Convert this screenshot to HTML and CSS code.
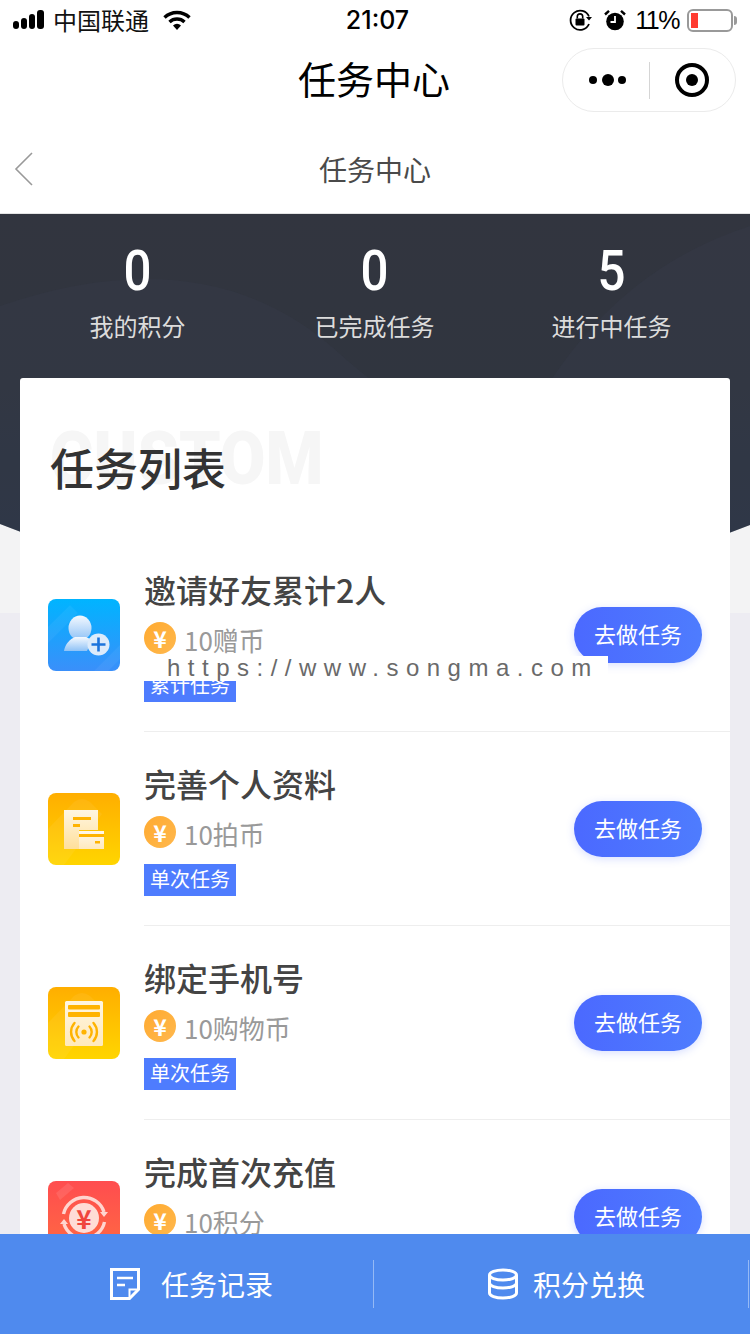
FILE: index.html
```html
<!DOCTYPE html>
<html lang="zh-CN">
<head>
<meta charset="utf-8">
<title>任务中心</title>
<link rel="stylesheet" href="styles.css">
</head>
<body>
<div class="page">
  <div class="status">
    <div class="status-left">
      <svg class="signal" width="34" height="20" viewBox="0 0 34 20"><rect x="1" y="11" width="6" height="8" rx="3"/><rect x="9" y="8" width="6" height="11" rx="3"/><rect x="17" y="4" width="6" height="15" rx="3"/><rect x="25" y="0" width="7" height="19" rx="3"/></svg>
      <span class="carrier">中国联通</span>
      <svg class="wifi" width="28" height="20" viewBox="0 0 28 20"><path d="M1.500 7.500a18 18 0 0 1 25 0" fill="none" stroke="#000" stroke-width="3.400"/><path d="M6.500 12a11 11 0 0 1 15 0" fill="none" stroke="#000" stroke-width="3.400"/><path d="M10 15.400a6 6 0 0 1 8 0L14 20z" fill="#000"/></svg>
    </div>
    <div class="time">21:07</div>
    <div class="status-right">
      <svg width="24" height="22" viewBox="0 0 24 22"><path d="M20 7.500A9.600 9.600 0 1 0 20 15" fill="none" stroke="#000" stroke-width="1.800"/><path d="M17 8h6l-3 3.500z" fill="#000"/><rect x="6.500" y="9.500" width="9" height="7" rx="1"/><path d="M8.300 9.500V7.600a2.700 2.700 0 0 1 5.400 0v1.900" fill="none" stroke="#000" stroke-width="1.600"/></svg>
      <svg class="alarm" width="22" height="22" viewBox="0 0 22 22"><circle cx="11" cy="12.500" r="8.800"/><path d="M11 7v6H6.500" fill="none" stroke="#fff" stroke-width="1.800"/><path d="M1 5.500 5 1.800M21 5.500 17 1.800" stroke="#000" stroke-width="2.400"/></svg>
      <span class="percent">11%</span>
      <div class="battery"><div class="battery-level"></div></div>
      <div class="battery-nub"></div>
    </div>
  </div>

  <div class="nav">
    <div class="nav-title">任务中心</div>
    <div class="capsule">
      <svg class="capsule-dots" width="40" height="14" viewBox="0 0 40 14"><circle cx="5" cy="7" r="4"/><circle cx="20" cy="7" r="6"/><circle cx="34" cy="7" r="4"/></svg>
      <div class="capsule-line"></div>
      <svg width="36" height="36" viewBox="0 0 36 36"><circle cx="18" cy="18" r="15" fill="none" stroke="#000" stroke-width="4"/><circle cx="18" cy="18" r="6"/></svg>
    </div>
  </div>

  <div class="header">
    <svg class="back" width="20" height="34" viewBox="0 0 20 34"><path d="M18 1 2 17l16 16" fill="none" stroke="#999" stroke-width="1.600"/></svg>
    <div class="header-title">任务中心</div>
  </div>

  <div class="main">
    <svg class="hero-bg" width="750" height="399" viewBox="0 0 750 399">
      <defs>
        <linearGradient id="heroFill" x1="0" y1="0" x2="0" y2="1"><stop offset="0" stop-color="#32353f"/><stop offset=".45" stop-color="#30353f"/><stop offset="1" stop-color="#2a3547"/></linearGradient>
      </defs>
      <path d="M0 0H750V311Q375 460 0 310Z" fill="url(#heroFill)"/>
      <path d="M0 92Q210 20 340 140 440 230 520 220 600 60 750 12V311Q375 460 0 310Z" fill="#3a4354" opacity=".2"/>
    </svg>

    <div class="stats">
      <div class="stat"><div class="stat-num">0</div><div class="stat-label">我的积分</div></div>
      <div class="stat"><div class="stat-num">0</div><div class="stat-label">已完成任务</div></div>
      <div class="stat"><div class="stat-num">5</div><div class="stat-label">进行中任务</div></div>
    </div>

    <div class="card">
      <div class="card-head">
        <div class="ghost">CUSTOM</div>
        <h1 class="card-title">任务列表</h1>
      </div>

      <div class="row">
        <svg class="task-icon" width="72" height="72" viewBox="0 0 72 72">
          <defs>
            <linearGradient id="blueBg" x1="0" y1="0" x2="0" y2="1"><stop offset="0" stop-color="#00b4ff"/><stop offset="1" stop-color="#3a8ffa"/></linearGradient>
            <linearGradient id="person" x1="0" y1="0" x2="0" y2="1"><stop offset="0" stop-color="#f4f9ff"/><stop offset="1" stop-color="#8fc2f6"/></linearGradient>
          </defs>
          <rect width="72" height="72" rx="8" fill="url(#blueBg)"/>
          <path d="M0 28 22 6l8 8L0 44zM46 72l26-26v14L60 72z" fill="#fff" opacity=".05"/>
          <ellipse cx="32" cy="29" rx="11.500" ry="12.500" fill="url(#person)"/>
          <path d="M16 52c1-7 6-12 11-14h11l6 3-5 11z" fill="url(#person)"/>
          <circle cx="50.500" cy="45.500" r="11" fill="#dcebfb"/>
          <path d="M43.500 45.500h14M50.500 38.500v14" stroke="#1c74dc" stroke-width="2.600"/>
        </svg>
        <div class="info">
          <div class="task-name">邀请好友累计2人</div>
          <div class="reward"><span class="coin">¥</span><span class="reward-text">10赠币</span></div>
          <div class="tag">累计任务</div>
        </div>
        <div class="go">去做任务</div>
      </div>

      <div class="row">
        <svg class="task-icon" width="72" height="72" viewBox="0 0 72 72">
          <defs>
            <linearGradient id="yellowBg" x1="0" y1="0" x2="0" y2="1"><stop offset="0" stop-color="#ffae00"/><stop offset="1" stop-color="#ffd500"/></linearGradient>
            <linearGradient id="paper" x1="0" y1="0" x2="0" y2="1"><stop offset="0" stop-color="#fff6e2"/><stop offset="1" stop-color="#ffdf9a"/></linearGradient>
            <linearGradient id="slip" x1="0" y1="0" x2="0" y2="1"><stop offset="0" stop-color="#fff8ea"/><stop offset="1" stop-color="#ffe9bd"/></linearGradient>
          </defs>
          <rect width="72" height="72" rx="8" fill="url(#yellowBg)"/>
          <path d="M0 36 26 9q8-6 16 0l12 12L16 72H6q-6 0-6-6z" fill="#fff" opacity=".06"/>
          <path d="M16 17h34v20H31v19H16z" fill="url(#paper)"/>
          <rect x="25" y="24" width="18" height="3" fill="#ffb300"/>
          <rect x="25" y="31" width="7" height="3" fill="#ffb300"/>
          <rect x="31" y="38" width="25" height="18" fill="url(#slip)"/>
          <rect x="31" y="41" width="25" height="3" fill="#ffb300"/>
          <rect x="47" y="48" width="5" height="2.500" fill="#ffb300"/>
        </svg>
        <div class="info">
          <div class="task-name">完善个人资料</div>
          <div class="reward"><span class="coin">¥</span><span class="reward-text">10拍币</span></div>
          <div class="tag">单次任务</div>
        </div>
        <div class="go">去做任务</div>
      </div>

      <div class="row">
        <svg class="task-icon" width="72" height="72" viewBox="0 0 72 72">
          <defs>
            <linearGradient id="yellowBg2" x1="0" y1="0" x2="0" y2="1"><stop offset="0" stop-color="#ffae00"/><stop offset="1" stop-color="#ffd500"/></linearGradient>
            <linearGradient id="paper2" x1="0" y1="0" x2="0" y2="1"><stop offset="0" stop-color="#fff6e2"/><stop offset="1" stop-color="#ffe9bb"/></linearGradient>
          </defs>
          <rect width="72" height="72" rx="8" fill="url(#yellowBg2)"/>
          <path d="M0 36 26 9q8-6 16 0l12 12L16 72H6q-6 0-6-6z" fill="#fff" opacity=".06"/>
          <rect x="17" y="14" width="38" height="45" rx="1.500" fill="url(#paper2)"/>
          <rect x="20" y="18" width="32" height="4.500" rx="1" fill="#ffb300"/>
          <rect x="20" y="25" width="32" height="5" rx="1" fill="#ffb300"/>
          <circle cx="36" cy="45" r="2.600" fill="#ffb300"/>
          <g fill="none" stroke="#ffb300" stroke-width="2.400" stroke-linecap="round">
            <path d="M30.500 39.500a8 8 0 0 0 0 11M41.500 39.500a8 8 0 0 1 0 11"/>
            <path d="M26.500 36a13.500 13.500 0 0 0 0 18M45.500 36a13.500 13.500 0 0 1 0 18"/>
          </g>
        </svg>
        <div class="info">
          <div class="task-name">绑定手机号</div>
          <div class="reward"><span class="coin">¥</span><span class="reward-text">10购物币</span></div>
          <div class="tag">单次任务</div>
        </div>
        <div class="go">去做任务</div>
      </div>

      <div class="row">
        <div class="task-icon red-icon">
          <svg class="red-ring" width="72" height="72" viewBox="0 0 72 72">
            <path d="M8 12 20 2l6 5-14 12z" fill="#fff" opacity=".1"/>
            <path d="M15.500 33A21 21 0 0 1 56 31" fill="none" stroke="#ffd5cf" stroke-width="3.400"/>
            <path d="M56.500 41A21 21 0 0 1 16 43" fill="none" stroke="#ffd5cf" stroke-width="3.400"/>
            <path d="M52 31h8l-4 5zM12 43h8l-4-5z" fill="#ffd5cf"/>
            <circle cx="36" cy="37" r="15" fill="#ffdcd6"/>
          </svg>
          <span class="red-yen">¥</span>
        </div>
        <div class="info">
          <div class="task-name">完成首次充值</div>
          <div class="reward"><span class="coin">¥</span><span class="reward-text">10积分</span></div>
          <div class="tag">单次任务</div>
        </div>
        <div class="go">去做任务</div>
      </div>
    </div>
  </div>

  <div class="url-mark">https://www.songma.com</div>

  <div class="bottom">
    <div class="bottom-item gap-left">
      <svg width="30" height="32" viewBox="0 0 30 32"><path d="M1.500 1.500h27v20l-9 9h-18z" fill="none" stroke="#fff" stroke-width="3"/><path d="M7 10h16M7 17h8" stroke="#fff" stroke-width="2.400"/><path d="M19.500 30v-8.500H28" fill="none" stroke="#fff" stroke-width="2"/></svg>
      <span>任务记录</span>
    </div>
    <div class="bottom-line"></div>
    <div class="bottom-item gap-right">
      <svg width="32" height="32" viewBox="0 0 32 32"><g fill="none" stroke="#fff" stroke-width="3"><ellipse cx="16" cy="7" rx="13.500" ry="5"/><path d="M2.500 7v18c0 2.800 6 5 13.500 5s13.500-2.200 13.500-5V7"/><path d="M2.500 15c0 2.800 6 5 13.500 5s13.500-2.200 13.500-5"/></g></svg>
      <span>积分兑换</span>
    </div>
    <div class="bottom-line"></div>
  </div>
</div>
</body>
</html>
```
FILE: styles.css
```css
* { box-sizing: border-box; }
html, body { margin: 0; padding: 0; }
body {
  font-family: "Noto Sans CJK SC", "Noto Sans", sans-serif;
  background: #edecf2;
}
.page {
  position: relative;
  width: 750px;
  height: 1334px;
  overflow: hidden;
  background: #edecf2;
}

/* status bar */
.status {
  height: 40px;
  display: grid;
  grid-template-columns: 1fr auto 1fr;
  align-items: center;
  background: #fff;
  color: #000;
}
.status-left { display: flex; align-items: center; padding-left: 12px; }
.signal { margin-right: 7px; }
.carrier { font-size: 24px; line-height: 40px; color: #111; }
.wifi { margin-left: 14px; }
.time {
  font-family: "Inter", "Liberation Sans", sans-serif;
  font-size: 25px;
  font-weight: 500;
  padding-left: 5px;
}
.status-right { display: flex; align-items: center; justify-content: flex-end; padding-right: 13px; }
.alarm { margin-left: 11px; }
.percent {
  font-family: "Liberation Sans", sans-serif;
  font-size: 25px;
  margin-left: 9px;
  letter-spacing: -1.500px;
}
.battery {
  width: 46px;
  height: 23px;
  margin-left: 8px;
  border: 2px solid #999;
  border-radius: 6px;
  padding: 2px;
}
.battery-level { width: 7px; height: 100%; background: #ff3b30; }
.battery-nub { width: 3px; height: 9px; margin-left: 1px; background: #999; border-radius: 0 3px 3px 0; }

/* mini program nav */
.nav {
  height: 80px;
  position: relative;
  display: flex;
  align-items: center;
  justify-content: flex-end;
  padding-right: 14px;
  background: #fff;
}
.nav-title {
  position: absolute;
  left: 0;
  right: 2px;
  top: 0;
  text-align: center;
  font-size: 38px;
  line-height: 76px;
  color: #000;
  font-weight: 400;
}
.capsule {
  position: relative;
  width: 174px;
  height: 64px;
  border: 1px solid #ebebeb;
  border-radius: 32px;
  display: flex;
  align-items: center;
  padding-left: 25px;
}
.capsule-line { width: 1px; height: 37px; background: #d5d5d5; margin: 0 24px 0 21px; }

/* page header */
.header {
  height: 94px;
  position: relative;
  display: flex;
  align-items: center;
  justify-content: center;
  background: #fff;
  border-bottom: 1px solid #e4e4e4;
  padding-top: 5px;
}
.back { position: absolute; left: 14px; top: 32px; }
.header-title { font-size: 28px; color: #4a4a4a; line-height: 88px; }

/* main */
.main {
  position: relative;
  background: linear-gradient(#f3f3f4 399px, #edecf2 399px);
  height: 1120px;
}
.hero-bg { position: absolute; left: 0; top: 0; display: block; }
.stats {
  position: relative;
  height: 164px;
  display: grid;
  grid-template-columns: repeat(3, 237px);
  padding-left: 19px;
}
.stat { text-align: center; color: #fff; }
.stat-num {
  font-family: "Roboto", sans-serif;
  font-size: 56px;
  font-weight: 500;
  line-height: 56px;
  margin-top: 29px;
  transform: scaleX(.88);
}
.stat-label { font-size: 24px; line-height: 34px; margin-top: 10px; color: #dcdcdc; }

/* card */
.card {
  position: relative;
  margin: 0 20px;
  background: #fff;
  border-radius: 3px;
}
.card-head { position: relative; height: 160px; padding: 58px 0 0 30px; }
.ghost {
  position: absolute;
  left: 30px;
  top: 44px;
  font-family: "Roboto", sans-serif;
  font-weight: 900;
  font-size: 74px;
  line-height: 74px;
  color: #f6f6f6;
  transform: scaleX(.895);
  transform-origin: left center;
}
.card-title {
  position: relative;
  margin: 0;
  font-size: 44px;
  line-height: 62px;
  font-weight: 500;
  color: #333;
}
.row {
  position: relative;
  height: 194px;
  display: flex;
  align-items: flex-start;
  padding-left: 28px;
}
.row::after {
  content: "";
  position: absolute;
  left: 124px;
  right: 0;
  bottom: 0;
  height: 1px;
  background: #eeeeee;
}
.task-icon { flex: none; margin-top: 61px; display: block; }
.info { flex: 1; margin-left: 24px; padding-top: 30px; }
.task-name { font-size: 32px; line-height: 42px; color: #444; font-weight: 500; }
.reward { display: flex; align-items: center; height: 32px; margin-top: 12px; }
.coin {
  width: 32px;
  height: 32px;
  border-radius: 50%;
  background: linear-gradient(135deg, #ffaa30, #ffb84d);
  color: #fff;
  font-size: 23px;
  font-weight: 700;
  line-height: 32px;
  text-align: center;
}
.reward-text { font-size: 26px; color: #999; margin-left: 8px; line-height: 32px; padding-top: 3px; }
.tag {
  width: 92px;
  height: 32px;
  margin-top: 16px;
  background: #4e7cfe;
  color: #fff;
  font-size: 20px;
  line-height: 29px;
  text-align: center;
}
.go {
  flex: none;
  width: 128px;
  height: 56px;
  margin: 69px 28px 0 0;
  border-radius: 28px;
  background: linear-gradient(90deg, #4b69ff, #4e7cfe);
  box-shadow: 0 2px 8px rgba(78, 110, 254, .22);
  color: #fff;
  font-size: 22px;
  line-height: 52px;
  text-align: center;
}
.red-icon {
  position: relative;
  width: 72px;
  height: 72px;
  border-radius: 8px;
  background: linear-gradient(#ff4d4f, #ff6a42);
}
.red-ring { position: absolute; left: 0; top: 0; }
.red-yen {
  position: absolute;
  left: 0;
  right: 0;
  top: 14px;
  text-align: center;
  color: #f0463e;
  font-size: 26px;
  line-height: 46px;
  font-weight: 700;
}

/* url overlay */
.url-mark {
  position: absolute;
  left: 144px;
  top: 656px;
  width: 464px;
  height: 25px;
  padding-left: 23px;
  background: #fff;
  color: #6a6a6a;
  font-family: "Liberation Sans", sans-serif;
  font-size: 24px;
  line-height: 23px;
  letter-spacing: 7.500px;
  white-space: nowrap;
}

/* bottom */
.bottom {
  position: absolute;
  left: 0;
  right: 0;
  bottom: 0;
  height: 100px;
  display: grid;
  grid-template-columns: 373px 1px 374px 1px 1fr;
  align-items: center;
  background: #4f8aee;
  color: #fff;
  font-size: 28px;
  line-height: 36px;
}
.bottom-item { display: flex; align-items: center; justify-content: center; }
.gap-left { gap: 21px; padding-left: 10px; }
.gap-right { gap: 14px; padding-left: 10px; }
.bottom-line { width: 1px; height: 48px; background: rgba(255, 255, 255, .4); }
```
